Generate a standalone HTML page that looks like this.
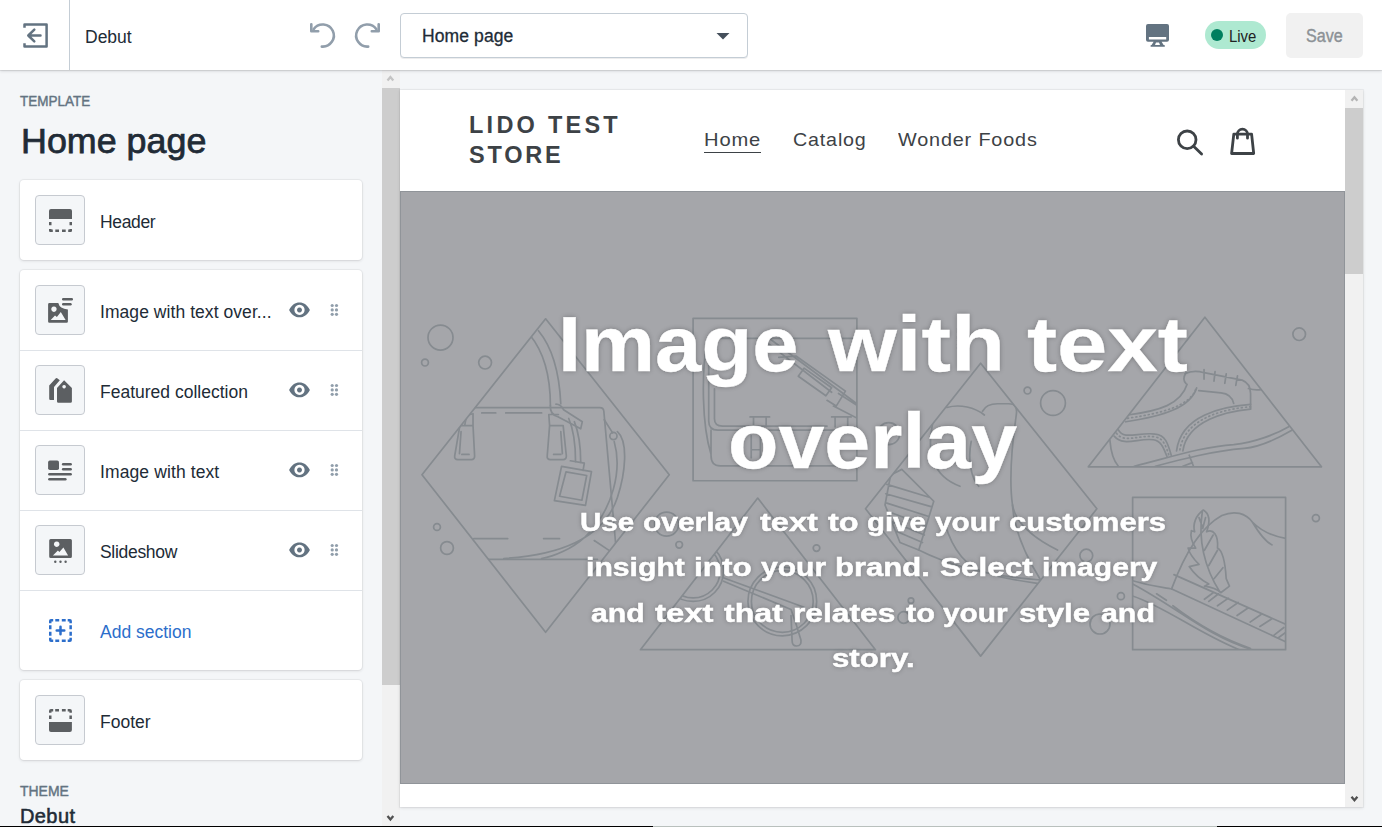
<!DOCTYPE html>
<html lang="en">
<head>
<meta charset="utf-8">
<title>Debut · Home page</title>
<style>
*{box-sizing:border-box;margin:0;padding:0}
html,body{width:1382px;height:827px;overflow:hidden;background:#f4f6f8;font-family:"Liberation Sans",sans-serif;color:#212b36}
body{position:relative}
.abs{position:absolute}
.t{position:absolute;white-space:nowrap;transform-origin:0 50%}
svg{position:absolute;display:block;overflow:visible}
#art path,#art circle{vector-effect:non-scaling-stroke}
/* top bar */
#topbar{position:absolute;left:0;top:0;width:1382px;height:70px;background:#fff;box-shadow:0 0 0 1px rgba(63,63,68,.1),0 1px 3px rgba(63,63,68,.2);z-index:5}
#back{position:absolute;left:0;top:0;width:70px;height:70px;border-right:1px solid #c4cdd5}
#pagesel{position:absolute;left:400px;top:13px;width:348px;height:45px;border:1px solid #c4cdd5;border-radius:4px;background:#fff;box-shadow:0 1px 0 rgba(22,29,37,.08)}
#live{position:absolute;left:1205px;top:21px;width:61px;height:28px;border-radius:14px;background:#aee9d1}
#live i{position:absolute;left:6px;top:8px;width:12px;height:12px;border-radius:50%;background:#007f5f}
#save{position:absolute;left:1286px;top:13px;width:77px;height:45px;border-radius:5px;background:#f1f1f1}
/* sidebar */
#sidebar{position:absolute;left:0;top:70px;width:382px;height:756px;background:#f4f6f8;overflow:hidden}
.card{position:absolute;left:20px;width:342px;background:#fff;border-radius:4px;box-shadow:0 0 0 1px rgba(63,63,68,.05),0 1px 3px rgba(63,63,68,.15)}
.row{position:absolute;left:0;width:342px;height:80px}
.row + .row::before{content:"";position:absolute;left:0;top:0;width:342px;height:1px;background:#dfe3e8}
.ico{position:absolute;left:15px;top:15px;width:50px;height:50px;border:1px solid #c6cad0;border-radius:4px;background:#f4f6f8}
.ico svg,.noico svg{left:-1px;top:-1px;width:50px;height:50px}
.noico{position:absolute;left:15px;top:15px;width:50px;height:50px;border:1px solid transparent}
.lbl{left:80px;top:32px;font-size:17.5px;line-height:20px;color:#212b36}
.eye{left:267px;top:27.1px;width:25px;height:25px}
.drag{left:302px;top:27.1px;width:25px;height:25px}
/* scrollbars */
.sb{position:absolute;width:18px;background:#f1f1f1}
.sb .thumb{position:absolute;left:0;width:18px;background:#cdcdcd}
.sb svg{left:0;width:18px;height:18px}
/* preview */
#preview{position:absolute;left:400px;top:90px;width:963px;height:717px;background:#fff;box-shadow:0 0 0 1px rgba(63,63,68,.05),0 1px 3px rgba(63,63,68,.15);overflow:hidden}
#hero{position:absolute;left:0;top:101px;width:945px;height:593px;background:#a5a6aa;overflow:hidden;box-shadow:inset 0 0 0 1px #909499}
#hero .t{color:#fff;font-weight:bold;-webkit-text-stroke:.35px #fff;text-shadow:0 0 5px rgba(0,0,0,.3);line-height:1;transform-origin:0 0;will-change:transform}
#hero .hs{-webkit-text-stroke:.5px #fff}
#store .t{color:#3d4246}
#bottomline{position:absolute;left:0;top:826px;width:1382px;height:1px;background:#000;z-index:9}
#bottomline i{position:absolute;left:653px;top:0;width:564px;height:1px;background:#b9c0bd}
</style>
</head>
<body>
<div id="topbar">
  <div id="back">
    <svg style="left:23px;top:23px" width="25" height="25" viewBox="0 0 25 25" fill="none" stroke="#637381" stroke-width="2.5" stroke-linejoin="round" stroke-linecap="round"><path d="M1.5 4.8V1.4H23.6V23.6H1.5V20.2" stroke-linecap="butt"/><path d="M17.5 12.5H5.5M11.3 6.6L5.3 12.5L11.3 18.4"/></svg>
  </div>
  <div class="t" id="themename" style="left:85px;top:27px;font-size:17.5px;line-height:20px">Debut</div>
  <svg id="undo" style="left:310px;top:23px" width="25" height="25" viewBox="0 0 25 25" fill="none" stroke="#919eab" stroke-width="2.6" stroke-linecap="round" stroke-linejoin="round"><path d="M3.6 6.2A11.1 11.1 0 1 1 11.8 23.6"/><path d="M1.3 1.2V8.2H8.2"/></svg>
  <svg id="redo" style="left:355px;top:23px" width="25" height="25" viewBox="0 0 25 25" fill="none" stroke="#919eab" stroke-width="2.6" stroke-linecap="round" stroke-linejoin="round"><path d="M21.4 6.2A11.1 11.1 0 1 0 13.2 23.6"/><path d="M23.7 1.2V8.2H16.8"/></svg>
  <div id="pagesel">
    <div class="t" style="left:21px;top:12px;font-size:17.5px;line-height:20px;-webkit-text-stroke:.3px #212b36;letter-spacing:.1px">Home page</div>
    <svg style="left:315px;top:19px" width="14" height="7" viewBox="0 0 14 7"><path d="M0.5 0H13.5L7 6.6Z" fill="#454f5b"/></svg>
  </div>
  <svg id="desktop" style="left:1144px;top:23px" width="25" height="25" viewBox="0 0 25 25" fill="#637381"><path d="M4 1H23a2 2 0 0 1 2 2V16.7a2 2 0 0 1-2 2H4a2 2 0 0 1-2-2V3a2 2 0 0 1 2-2ZM4.9 13.9V16.4H22.2V13.9ZM9.6 18.7H17.6L19.6 22H20a.9.9 0 0 1 0 1.8H7.4a.9.9 0 0 1 0-1.8H7.6ZM12 19.6L11 22H16L15 19.6Z" fill-rule="evenodd"/></svg>
  <div id="live"><i></i><div class="t" style="left:24px;top:6px;font-size:16px;line-height:20px;color:#202223;transform:scaleX(.93)">Live</div></div>
  <div id="save"><div class="t" style="left:20px;top:13px;font-size:17.5px;line-height:20px;color:#8c9196;-webkit-text-stroke:.4px #8c9196;transform:scaleX(.92)">Save</div></div>
</div>

<div id="sidebar">
  <div class="t" id="tpl" style="left:20px;top:21px;font-size:15.5px;line-height:20px;color:#637381;-webkit-text-stroke:.45px #637381;transform:scaleX(.87)">TEMPLATE</div>
  <div class="t" id="h1" style="left:20.5px;top:48.8px;font-size:35.5px;line-height:44px;-webkit-text-stroke:.75px #212b36;transform:scaleX(1.01)">Home page</div>

  <div class="card" style="top:110px;height:80px">
    <div class="row" style="top:0">
      <div class="ico"><svg viewBox="0 0 50 50" fill="#5c5f62"><path d="M14 24V16a2 2 0 0 1 2-2H35a2 2 0 0 1 2 2V24Z"/><path d="M14 27h2.5v3.2H14zM34.5 27H37v3.2H34.5zM14 34h2.5v.5h1.3V37H15.3A1.3 1.3 0 0 1 14 35.7zM37 34H34.5v.5H33.2V37h2.5A1.3 1.3 0 0 0 37 35.7zM20.3 34.5H24V37H20.3zM27 34.5H30.7V37H27z"/></svg></div>
      <div class="t lbl" style="letter-spacing:-.35px">Header</div>
    </div>
  </div>

  <div class="card" style="top:200px;height:400px">
    <div class="row" style="top:0">
      <div class="ico"><svg viewBox="0 0 50 50" fill="#5c5f62"><path fill-rule="evenodd" d="M14.4 18.1H23.3Q24.6 24 32.9 24.4V36.5a1.3 1.3 0 0 1-1.3 1.3H14.4a1.3 1.3 0 0 1-1.3-1.3V19.4a1.3 1.3 0 0 1 1.3-1.3ZM18.95 21.5a2.7 2.7 0 1 0 .01 0ZM15.7 34.9L20 30.6L21.9 32L25.8 26.9L30.6 34.9Z"/><rect x="27" y="13.1" width="11" height="2.4" rx="1.2"/><rect x="27" y="18.1" width="9.7" height="2.4" rx="1.2"/></svg></div>
      <div class="t lbl" style="letter-spacing:.06px">Image with text over...</div>
      <svg class="eye" viewBox="0 0 25 25"><path fill="#637381" fill-rule="evenodd" d="M2.1 12.9C4.6 8 8.2 5.5 12.5 5.5S20.4 8 22.9 12.9C20.4 17.8 16.8 20.3 12.5 20.3S4.6 17.8 2.1 12.9ZM12.5 7.8a5.1 5.1 0 1 0 .01 0ZM12.5 10.4a2.5 2.5 0 1 1-.01 0Z"/></svg>
      <svg class="drag" viewBox="0 0 25 25"><g fill="#919eab"><circle cx="10.2" cy="8.5" r="1.6"/><circle cx="14.5" cy="8.5" r="1.6"/><circle cx="10.2" cy="12.9" r="1.6"/><circle cx="14.5" cy="12.9" r="1.6"/><circle cx="10.2" cy="17.3" r="1.6"/><circle cx="14.5" cy="17.3" r="1.6"/></g></svg>
    </div>
    <div class="row" style="top:80px">
      <div class="ico"><svg viewBox="0 0 50 50" fill="#5c5f62"><path fill-rule="evenodd" d="M22 22.9L29.1 15.3L36.9 22.9V36.4a1.4 1.4 0 0 1-1.4 1.4H23.4A1.4 1.4 0 0 1 22 36.4ZM29.1 19.9a1.8 1.8 0 1 0 .01 0Z"/><path d="M14.2 20.4L20.6 13.4a1.2 1.2 0 0 1 1.6-.1L24.8 15.2L19 21.9V34.9H15.4a1.2 1.2 0 0 1-1.2-1.2Z"/></svg></div>
      <div class="t lbl">Featured collection</div>
      <svg class="eye" viewBox="0 0 25 25"><path fill="#637381" fill-rule="evenodd" d="M2.1 12.9C4.6 8 8.2 5.5 12.5 5.5S20.4 8 22.9 12.9C20.4 17.8 16.8 20.3 12.5 20.3S4.6 17.8 2.1 12.9ZM12.5 7.8a5.1 5.1 0 1 0 .01 0ZM12.5 10.4a2.5 2.5 0 1 1-.01 0Z"/></svg>
      <svg class="drag" viewBox="0 0 25 25"><g fill="#919eab"><circle cx="10.2" cy="8.5" r="1.6"/><circle cx="14.5" cy="8.5" r="1.6"/><circle cx="10.2" cy="12.9" r="1.6"/><circle cx="14.5" cy="12.9" r="1.6"/><circle cx="10.2" cy="17.3" r="1.6"/><circle cx="14.5" cy="17.3" r="1.6"/></g></svg>
    </div>
    <div class="row" style="top:160px">
      <div class="ico"><svg viewBox="0 0 50 50" fill="#5c5f62"><rect x="13.1" y="15.5" width="10.9" height="9.6" rx="1.8"/><rect x="26.9" y="18.1" width="10" height="2.5" rx="1.25"/><rect x="26.9" y="23" width="10" height="2.5" rx="1.25"/><rect x="13.1" y="28" width="23.8" height="2.5" rx="1.25"/><rect x="13.1" y="33" width="18.5" height="2.5" rx="1.25"/></svg></div>
      <div class="t lbl" style="letter-spacing:.11px">Image with text</div>
      <svg class="eye" viewBox="0 0 25 25"><path fill="#637381" fill-rule="evenodd" d="M2.1 12.9C4.6 8 8.2 5.5 12.5 5.5S20.4 8 22.9 12.9C20.4 17.8 16.8 20.3 12.5 20.3S4.6 17.8 2.1 12.9ZM12.5 7.8a5.1 5.1 0 1 0 .01 0ZM12.5 10.4a2.5 2.5 0 1 1-.01 0Z"/></svg>
      <svg class="drag" viewBox="0 0 25 25"><g fill="#919eab"><circle cx="10.2" cy="8.5" r="1.6"/><circle cx="14.5" cy="8.5" r="1.6"/><circle cx="10.2" cy="12.9" r="1.6"/><circle cx="14.5" cy="12.9" r="1.6"/><circle cx="10.2" cy="17.3" r="1.6"/><circle cx="14.5" cy="17.3" r="1.6"/></g></svg>
    </div>
    <div class="row" style="top:240px">
      <div class="ico"><svg viewBox="0 0 50 50" fill="#5c5f62"><path fill-rule="evenodd" d="M15.7 14H35.4a1.5 1.5 0 0 1 1.5 1.5V31.4a1.5 1.5 0 0 1-1.5 1.5H15.7a1.5 1.5 0 0 1-1.5-1.5V15.5a1.5 1.5 0 0 1 1.5-1.5ZM21.7 16.4a2.8 2.8 0 1 0 .01 0ZM17.9 30.6L22.9 25.5L24.4 26.9L28.4 22.6L33.1 30.6Z"/><circle cx="20.3" cy="36.7" r="1.2"/><circle cx="25.5" cy="36.7" r="1.2"/><circle cx="30.6" cy="36.7" r="1.2"/></svg></div>
      <div class="t lbl" style="letter-spacing:-.3px">Slideshow</div>
      <svg class="eye" viewBox="0 0 25 25"><path fill="#637381" fill-rule="evenodd" d="M2.1 12.9C4.6 8 8.2 5.5 12.5 5.5S20.4 8 22.9 12.9C20.4 17.8 16.8 20.3 12.5 20.3S4.6 17.8 2.1 12.9ZM12.5 7.8a5.1 5.1 0 1 0 .01 0ZM12.5 10.4a2.5 2.5 0 1 1-.01 0Z"/></svg>
      <svg class="drag" viewBox="0 0 25 25"><g fill="#919eab"><circle cx="10.2" cy="8.5" r="1.6"/><circle cx="14.5" cy="8.5" r="1.6"/><circle cx="10.2" cy="12.9" r="1.6"/><circle cx="14.5" cy="12.9" r="1.6"/><circle cx="10.2" cy="17.3" r="1.6"/><circle cx="14.5" cy="17.3" r="1.6"/></g></svg>
    </div>
    <div class="row" style="top:320px">
      <div class="noico"><svg viewBox="0 0 50 50" fill="#2c6ecb"><path d="M14 18.2V16a2 2 0 0 1 2-2h2.2v2.5H16.5v1.7zM36.9 18.2V16a2 2 0 0 0-2-2H32.7v2.5h1.7v1.7zM14 32.7V34.9a2 2 0 0 0 2 2h2.2V34.4H16.5V32.7zM36.9 32.7V34.9a2 2 0 0 1-2 2H32.7V34.4h1.7V32.7zM20.3 14h3.9v2.5H20.3zM26.8 14h3.9v2.5H26.8zM20.3 34.4h3.9v2.5H20.3zM26.8 34.4h3.9v2.5H26.8zM14 20.3h2.5v3.9H14zM14 26.8h2.5v3.9H14zM34.4 20.3h2.5v3.9H34.4zM34.4 26.8h2.5v3.9H34.4z"/><path d="M25.5 21.7V29.3M21.7 25.5H29.3" stroke="#2c6ecb" stroke-width="2.5" stroke-linecap="round"/></svg></div>
      <div class="t lbl" style="color:#2c6ecb">Add section</div>
    </div>
  </div>

  <div class="card" style="top:610px;height:80px">
    <div class="row" style="top:0">
      <div class="ico"><svg viewBox="0 0 50 50" fill="#5c5f62"><path d="M14 26.9V34.9a2 2 0 0 0 2 2H34.9a2 2 0 0 0 2-2V26.9Z"/><path d="M14 20.4h2.5V24H14zM34.4 20.4H36.9V24H34.4zM14 17.8V16a2 2 0 0 1 2-2h2.2v2.5H16.5v1.3zM36.9 17.8V16a2 2 0 0 0-2-2H32.7v2.5h1.7v1.3zM20.2 14H24v2.5H20.2zM26.9 14h3.8v2.5H26.9z"/></svg></div>
      <div class="t lbl">Footer</div>
    </div>
  </div>

  <div class="t" id="thm" style="left:20px;top:711px;font-size:15.5px;line-height:20px;color:#637381;-webkit-text-stroke:.45px #637381;transform:scaleX(.9)">THEME</div>
  <div class="t" id="h2" style="left:20px;top:733px;font-size:20px;line-height:26px;-webkit-text-stroke:.55px #212b36;letter-spacing:.4px">Debut</div>
</div>

<div class="sb" id="sb1" style="left:382px;top:70px;height:756px">
  <div class="thumb" style="top:18px;height:597px"></div>
  <svg style="top:0" viewBox="0 0 18 18"><path d="M5.5 10.6L8.4 7.1L11.3 10.6" fill="none" stroke="#c4c4c4" stroke-width="2.3"/></svg>
  <svg style="top:738px" viewBox="0 0 18 18"><path d="M5.5 8L8.4 11.5L11.3 8" fill="none" stroke="#505050" stroke-width="2.3"/></svg>
</div>

<div id="preview">
  <div id="store">
    <div class="t" id="logo1" style="left:69px;top:20px;font-size:23.5px;line-height:30px;font-weight:bold;letter-spacing:3.25px">LIDO TEST</div>
    <div class="t" id="logo2" style="left:69px;top:50px;font-size:23.5px;line-height:30px;font-weight:bold;letter-spacing:2.8px">STORE</div>
    <div class="t" id="nav1" style="left:303.5px;top:38px;font-size:19px;line-height:24px;letter-spacing:.8px;transform:scaleX(1.06)">Home</div>
    <div class="abs" style="left:304px;top:62px;width:57px;height:1px;background:#3d4246"></div>
    <div class="t" id="nav2" style="left:393px;top:38px;font-size:19px;line-height:24px;letter-spacing:.8px;transform:scaleX(1.036)">Catalog</div>
    <div class="t" id="nav3" style="left:498px;top:38px;font-size:19px;line-height:24px;letter-spacing:.8px;transform:scaleX(1.043)">Wonder Foods</div>
    <svg style="left:775px;top:38px" width="30" height="30" viewBox="0 0 30 30" fill="none" stroke="#3d4246" stroke-width="2.8" stroke-linecap="round"><circle cx="12.2" cy="11.8" r="8.8"/><path d="M18.6 18.2L26.6 26"/></svg>
    <svg style="left:829px;top:36px" width="28" height="30" viewBox="0 0 28 30" fill="none" stroke="#3d4246" stroke-width="2.8" stroke-linejoin="round" stroke-linecap="round"><path d="M4.8 8.1H22.6L24.7 27.5H2.6Z"/><path d="M8.4 12.2V8.2A5.05 5.05 0 0 1 18.5 8.2V12.2"/></svg>
  </div>
  <div id="hero">
    <svg id="art" style="left:0;top:0" width="945" height="593" viewBox="400 191 945 593" fill="none" stroke="#868b90" stroke-width="1.7" stroke-linejoin="round" stroke-linecap="round">
      <defs>
        <clipPath id="c1"><path d="M340 22L650 413L340 808L30 413Z"/></clipPath>
        <clipPath id="c2"><path d="M57 58H770V765H57Z"/></clipPath>
        <clipPath id="c3"><path d="M614 58L1165 765H63Z"/></clipPath>
        <clipPath id="c4"><path d="M335 22L645 410L335 803L28 410Z"/></clipPath>
        <clipPath id="c5"><path d="M587 60L1128 757H48Z"/></clipPath>
        <clipPath id="c6"><path d="M150 57H853V757H150Z"/></clipPath>
      </defs>
      <g transform="translate(410 310) scale(.39886)">
        <path d="M340 22L650 413L340 808L30 413Z"/>
        <g clip-path="url(#c1)">
          <path d="M150 245H476Q485 245 486 254L516 590M150 625H470M180 258H215M240 258H330M160 573H245M335 573H375"/>
          <path d="M300 62C340 110 352 180 352 240M322 52C362 100 375 170 378 235"/>
          <path d="M352 240Q350 262 372 268L428 298L432 280L385 250Q378 236 366 236"/>
          <path d="M398 272C410 300 415 340 415 380M412 280C424 310 428 350 428 382"/>
          <path d="M402 378L437 384L434 402M380 392L455 405L440 490L362 478ZM391 406L443 415L431 477L375 467Z"/>
          <path d="M125 290L158 290L162 366Q162 375 154 375H120Q111 375 112 366ZM137 290L142 264L158 260V290M128 305L124 360M148 362H130"/>
          <path d="M350 290H384L392 366Q392 375 384 375H352Q343 375 344 366ZM350 290L348 262H372M378 305L382 360M360 362H378"/>
          <path d="M487 275L508 308M520 305C548 330 540 410 520 470C495 545 420 612 235 623M512 330C532 400 510 500 440 568C405 600 360 618 330 623"/>
          <circle cx="510" cy="316" r="9"/>
          <path d="M462 578L498 602"/>
        </g>
      </g>
      <g transform="translate(680 305) scale(.22973)">
        <path d="M57 58H770V765H57Z"/>
        <g clip-path="url(#c2)">
          <path d="M118 145H770M125 145V505Q125 545 165 545H770M150 365V495Q150 527 185 527H640"/>
          <path d="M135 545V655Q135 700 175 700H770M118 150C93 300 95 520 135 650"/>
          <path d="M395 150L770 430M380 165L660 380M430 228L505 222L720 375L680 440L640 415M540 275L660 360L635 395L515 310ZM690 385L770 437M668 440L770 492"/>
          <path d="M305 487H390M320 487V530M375 487V530M660 487H745M675 487V530M730 487V530M310 570V665M350 570V665M310 630H350"/>
        </g>
      </g>
      <g transform="translate(1075 305) scale(.21155)">
        <path d="M614 58L1165 765H63Z"/>
        <g clip-path="url(#c3)">
          <path d="M520 325Q560 305 610 320L790 355Q830 370 830 420V490M610 305V350M662 315L657 360M715 325L708 370M768 335L760 380M525 320Q505 350 525 372"/>
          <path d="M530 375C500 470 400 500 250 520M575 392C545 485 420 525 240 552" />
          <path d="M570 400C540 478 410 512 245 536" stroke-dasharray="1 3.2"/>
          <path d="M830 470C700 480 500 520 480 690M830 492C720 502 530 545 510 690M585 405L690 415Q740 420 750 465"/>
          <path d="M830 481C710 491 515 532 495 690" stroke-dasharray="1 3.2"/>
          <path d="M205 590C230 640 300 600 380 610C430 615 440 660 455 710M185 620C230 672 300 627 370 637C410 642 420 682 435 716"/>
          <path d="M196 606C230 655 300 613 376 623C420 628 430 670 445 713" stroke-dasharray="1 3.2"/>
          <path d="M280 762C450 720 600 670 750 660C850 650 950 610 1010 575M380 762C500 730 650 690 800 678C880 670 960 630 1025 592"/>
          <path d="M820 395Q850 405 880 400M165 640C170 700 185 740 205 762M540 710L560 762M510 762L555 745"/>
        </g>
      </g>
      <g transform="translate(855 355) scale(.375)">
        <path d="M335 22L645 410L335 803L28 410Z"/>
        <g clip-path="url(#c4)">
          <path d="M340 150Q350 130 380 130H410Q435 130 430 160C420 230 410 330 420 400C430 460 500 500 540 520"/>
          <path d="M245 140C280 130 320 140 345 160M210 170C190 250 200 320 280 350M310 230C300 280 310 330 330 350"/>
          <path d="M95 320L125 305L210 390L170 520L120 500L80 400ZM85 345L200 380M82 370L205 405M85 395L195 430M95 420L190 455M100 445L185 480M110 470L180 500"/>
          <path d="M170 520C250 560 350 590 495 600M240 450C260 520 300 570 350 580M420 400C425 480 470 560 495 600M380 590C420 600 460 605 495 610"/>
        </g>
      </g>
      <g transform="translate(630 485) scale(.21758)">
        <path d="M587 60L1128 757H48Z"/>
        <g clip-path="url(#c5)">
          <circle cx="700" cy="535" r="158"/><circle cx="700" cy="535" r="142"/>
          <circle cx="290" cy="395" r="140"/><circle cx="290" cy="395" r="124"/>
          <path d="M425 425L800 562M430 442L740 572Q765 640 785 710Q790 740 765 740Q745 740 745 715L740 600"/>
        </g>
      </g>
      <g transform="translate(1100 485) scale(.21758)">
        <path d="M150 57H853V757H150Z"/>
        <g clip-path="url(#c6)">
          <path d="M330 475C380 340 450 200 560 140C620 115 670 130 700 170C740 210 790 235 853 245M700 170C730 220 760 260 790 275"/>
          <path d="M340 412L853 640M330 478L853 720M480 525L520 495M500 535L545 500M540 555L590 520M585 575L635 540M630 600L680 565M690 630L740 595M735 650L790 615M800 690L845 655M820 702L853 678"/>
          <path d="M150 440C250 470 300 470 330 478M150 510C300 560 450 680 640 757M150 455C350 560 500 700 700 757M335 555C420 620 540 700 690 750M260 500L305 530"/>
          <path d="M475 115C500 130 510 160 490 215C520 200 545 230 540 290C560 300 575 350 580 430L595 465L555 495C540 480 520 470 480 465L500 455C470 440 440 420 410 375L455 365C430 340 410 310 405 290L440 290C420 260 415 230 420 210L435 215C425 180 440 140 475 115ZM470 125C450 250 480 380 550 490M455 150L470 190M485 150L472 200M520 230L480 300M540 300L500 370M565 380L525 430"/>
        </g>
      </g>
      <circle cx="440.5" cy="337.6" r="12.5"/><circle cx="425" cy="362.6" r="3.4"/><circle cx="485.1" cy="362.6" r="6.4"/>
      <circle cx="1299.2" cy="334.2" r="6.3"/><circle cx="1053" cy="403" r="12.4"/><circle cx="1027.5" cy="390.6" r="3.4"/>
      <circle cx="437" cy="527" r="3.4"/><circle cx="447" cy="548" r="6.4"/><circle cx="1315.9" cy="518.1" r="3.5"/>
      <circle cx="1086.3" cy="555.6" r="6.4"/><circle cx="1120.9" cy="596.2" r="3.5"/><circle cx="1100" cy="624" r="10"/>
      <circle cx="888.7" cy="433.7" r="11"/><circle cx="911" cy="600.6" r="2.8"/><circle cx="903.7" cy="617.5" r="5.8"/>
      <circle cx="666.6" cy="524.2" r="12"/><circle cx="679.2" cy="544.8" r="3.3"/><circle cx="816.5" cy="548.1" r="3.3"/>
    </svg>
    <!--HT-->
    <div class="t ht" style="left:157.63px;top:115.00px;font-size:77.5px;transform:scaleX(1.0738)">Image</div>
    <div class="t ht" style="left:428.04px;top:115.00px;font-size:77.5px;transform:scaleX(1.1423)">with</div>
    <div class="t ht" style="left:627.20px;top:115.00px;font-size:77.5px;transform:scaleX(1.1671)">text</div>
    <div class="t ht" style="left:327.55px;top:212.00px;font-size:77.5px;transform:scaleX(1.0653)">overlay</div>
    <div class="t hs" style="left:179.66px;top:318.00px;font-size:26px;transform:scaleX(1.1355)">Use</div>
    <div class="t hs" style="left:242.85px;top:318.00px;font-size:26px;transform:scaleX(1.1512)">overlay</div>
    <div class="t hs" style="left:359.50px;top:318.00px;font-size:26px;transform:scaleX(1.2538)">text</div>
    <div class="t hs" style="left:428.00px;top:318.00px;font-size:26px;transform:scaleX(1.2512)">to</div>
    <div class="t hs" style="left:466.77px;top:318.00px;font-size:26px;transform:scaleX(1.1292)">give</div>
    <div class="t hs" style="left:535.10px;top:318.00px;font-size:26px;transform:scaleX(1.1454)">your</div>
    <div class="t hs" style="left:608.61px;top:318.00px;font-size:26px;transform:scaleX(1.1943)">customers</div>
    <div class="t hs" style="left:185.64px;top:363.00px;font-size:26px;transform:scaleX(1.1602)">insight</div>
    <div class="t hs" style="left:293.79px;top:363.00px;font-size:26px;transform:scaleX(1.2149)">into</div>
    <div class="t hs" style="left:360.70px;top:363.00px;font-size:26px;transform:scaleX(1.1561)">your</div>
    <div class="t hs" style="left:434.61px;top:363.00px;font-size:26px;transform:scaleX(1.1939)">brand.</div>
    <div class="t hs" style="left:539.60px;top:363.00px;font-size:26px;transform:scaleX(1.2100)">Select</div>
    <div class="t hs" style="left:642.34px;top:363.00px;font-size:26px;transform:scaleX(1.1565)">imagery</div>
    <div class="t hs" style="left:191.30px;top:409.00px;font-size:26px;transform:scaleX(1.1623)">and</div>
    <div class="t hs" style="left:254.80px;top:409.00px;font-size:26px;transform:scaleX(1.2624)">text</div>
    <div class="t hs" style="left:323.70px;top:409.00px;font-size:26px;transform:scaleX(1.2375)">that</div>
    <div class="t hs" style="left:393.08px;top:409.00px;font-size:26px;transform:scaleX(1.2200)">relates</div>
    <div class="t hs" style="left:506.00px;top:409.00px;font-size:26px;transform:scaleX(1.1835)">to</div>
    <div class="t hs" style="left:543.40px;top:409.00px;font-size:26px;transform:scaleX(1.1490)">your</div>
    <div class="t hs" style="left:619.30px;top:409.00px;font-size:26px;transform:scaleX(1.2006)">style</div>
    <div class="t hs" style="left:700.50px;top:409.00px;font-size:26px;transform:scaleX(1.1667)">and</div>
    <div class="t hs" style="left:432.00px;top:454.00px;font-size:26px;transform:scaleX(1.2003)">story.</div>
    <!--/HT-->
  </div>
  <div class="sb" id="sb2" style="left:945px;top:0;height:717px">
    <div class="thumb" style="top:18px;height:166px"></div>
    <svg style="top:0" viewBox="0 0 18 18"><path d="M6.5 10.8L9.45 7.3L12.4 10.8" fill="none" stroke="#b4b4b4" stroke-width="2.3"/></svg>
    <svg style="top:699px" viewBox="0 0 18 18"><path d="M6.5 7.8L9.45 11.3L12.4 7.8" fill="none" stroke="#505050" stroke-width="2.3"/></svg>
  </div>
</div>
<div id="bottomline"><i></i></div>
</body>
</html>
